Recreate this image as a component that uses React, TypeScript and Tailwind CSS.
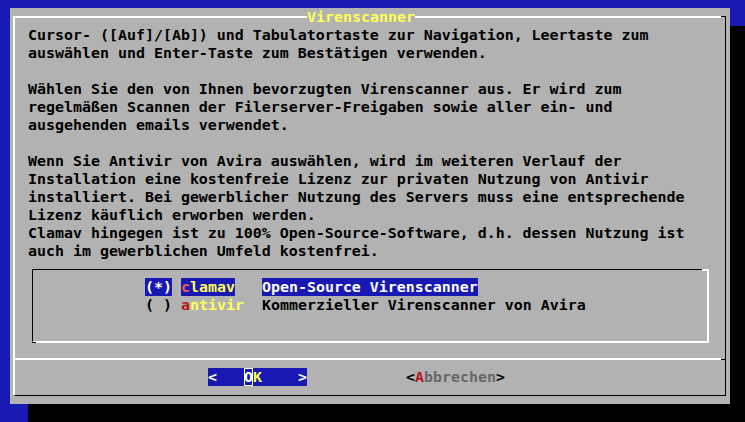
import React from "react";

const bodyRows = [
  "Cursor- ([Auf]/[Ab]) und Tabulatortaste zur Navigation, Leertaste zum",
  "auswählen und Enter-Taste zum Bestätigen verwenden.",
  "",
  "Wählen Sie den von Ihnen bevorzugten Virenscanner aus. Er wird zum",
  "regelmäßen Scannen der Filerserver-Freigaben sowie aller ein- und",
  "ausgehenden emails verwendet.",
  "",
  "Wenn Sie Antivir von Avira auswählen, wird im weiteren Verlauf der",
  "Installation eine kostenfreie Lizenz zur privaten Nutzung von Antivir",
  "installiert. Bei gewerblicher Nutzung des Servers muss eine entsprechende",
  "Lizenz käuflich erworben werden.",
  "Clamav hingegen ist zu 100% Open-Source-Software, d.h. dessen Nutzung ist",
  "auch im gewerblichen Umfeld kostenfrei.",
];

export default function App() {
  return (
    <div className="w-[745px] h-[422px] bg-[#1818b2] overflow-hidden pt-[8px] pl-[10px]">
      <div className="relative w-[720px] h-[396px] bg-[#b2b2b2] shadow-[18px_18px_0_0_#000] pt-[8px] pb-[8px] pl-[3px] pr-[4px] font-['DejaVu_Sans_Mono',monospace] text-[14.95px] leading-[18px] font-bold text-black">
        <div className="relative flex flex-col h-full border-t-2 border-l-2 border-t-white border-l-white border-r border-b border-r-black border-b-black pt-[8px]">
          {/* title sits on the top border */}
          <div className="absolute top-[-10px] left-[292px] h-[18px] bg-[#b2b2b2] text-[#ffff54] whitespace-pre">
            Virenscanner
          </div>
          <div className="absolute -top-[2px] -right-[1px] w-[5px] h-[2px] bg-[#b2b2b2] border-t border-r border-black" />

          {/* message text */}
          <div className="pl-[13px]">
            {bodyRows.map((row, i) => (
              <div key={i} className="h-[18px] whitespace-pre">
                {row}
              </div>
            ))}
          </div>

          {/* radiolist box */}
          <div className="relative ml-[17px] mt-[9px] mb-[7px] w-[677px] h-[74px] border-t border-l border-t-black border-l-black border-r-2 border-b-2 border-r-white border-b-white pt-[8px] pl-[112px]">
            <div className="absolute -top-[1px] -right-[2px] w-[7px] h-[2px] bg-white" />
            <div className="absolute -bottom-[2px] -left-[1px] w-[4px] h-[1px] bg-black" />
            <div className="flex h-[18px] whitespace-pre">
              <span className="bg-[#1818b2] text-white">(*)</span>
              <span> </span>
              <span className="bg-[#1818b2] text-[#ffff54]">
                <span className="text-[#ff5454]">c</span>lamav
              </span>
              <span>{"   "}</span>
              <span className="bg-[#1818b2] text-white">
                Open-Source Virenscanner
              </span>
            </div>
            <div className="flex h-[18px] whitespace-pre">
              <span>( )</span>
              <span> </span>
              <span className="text-[#ffff54]">
                <span className="text-[#b21818]">a</span>ntivir
              </span>
              <span>{"  "}</span>
              <span>Kommerzieller Virenscanner von Avira</span>
            </div>
          </div>

          {/* separator */}
          <div className="flex mt-[8px] h-[2px]">
            <div className="flex-1 h-[2px] bg-white" />
            <div className="w-[4px] h-[1px] mt-[1px] bg-black" />
          </div>

          {/* buttons */}
          <div className="flex mt-[8px] h-[18px] pl-[193px] whitespace-pre">
            <span className="flex bg-[#1818b2] text-white">
              <span>{"<   "}</span>
              <span className="inline-block w-[9px] h-[18px] shadow-[inset_0_0_0_1px_#fff]">
                O
              </span>
              <span className="text-[#ffff54]">K</span>
              <span>{"    >"}</span>
            </span>
            <span className="ml-[99px]">
              {"<"}
              <span className="text-[#b21818]">A</span>
              <span className="text-[#686868]">bbrechen</span>
              {">"}
            </span>
          </div>
        </div>
      </div>
    </div>
  );
}
